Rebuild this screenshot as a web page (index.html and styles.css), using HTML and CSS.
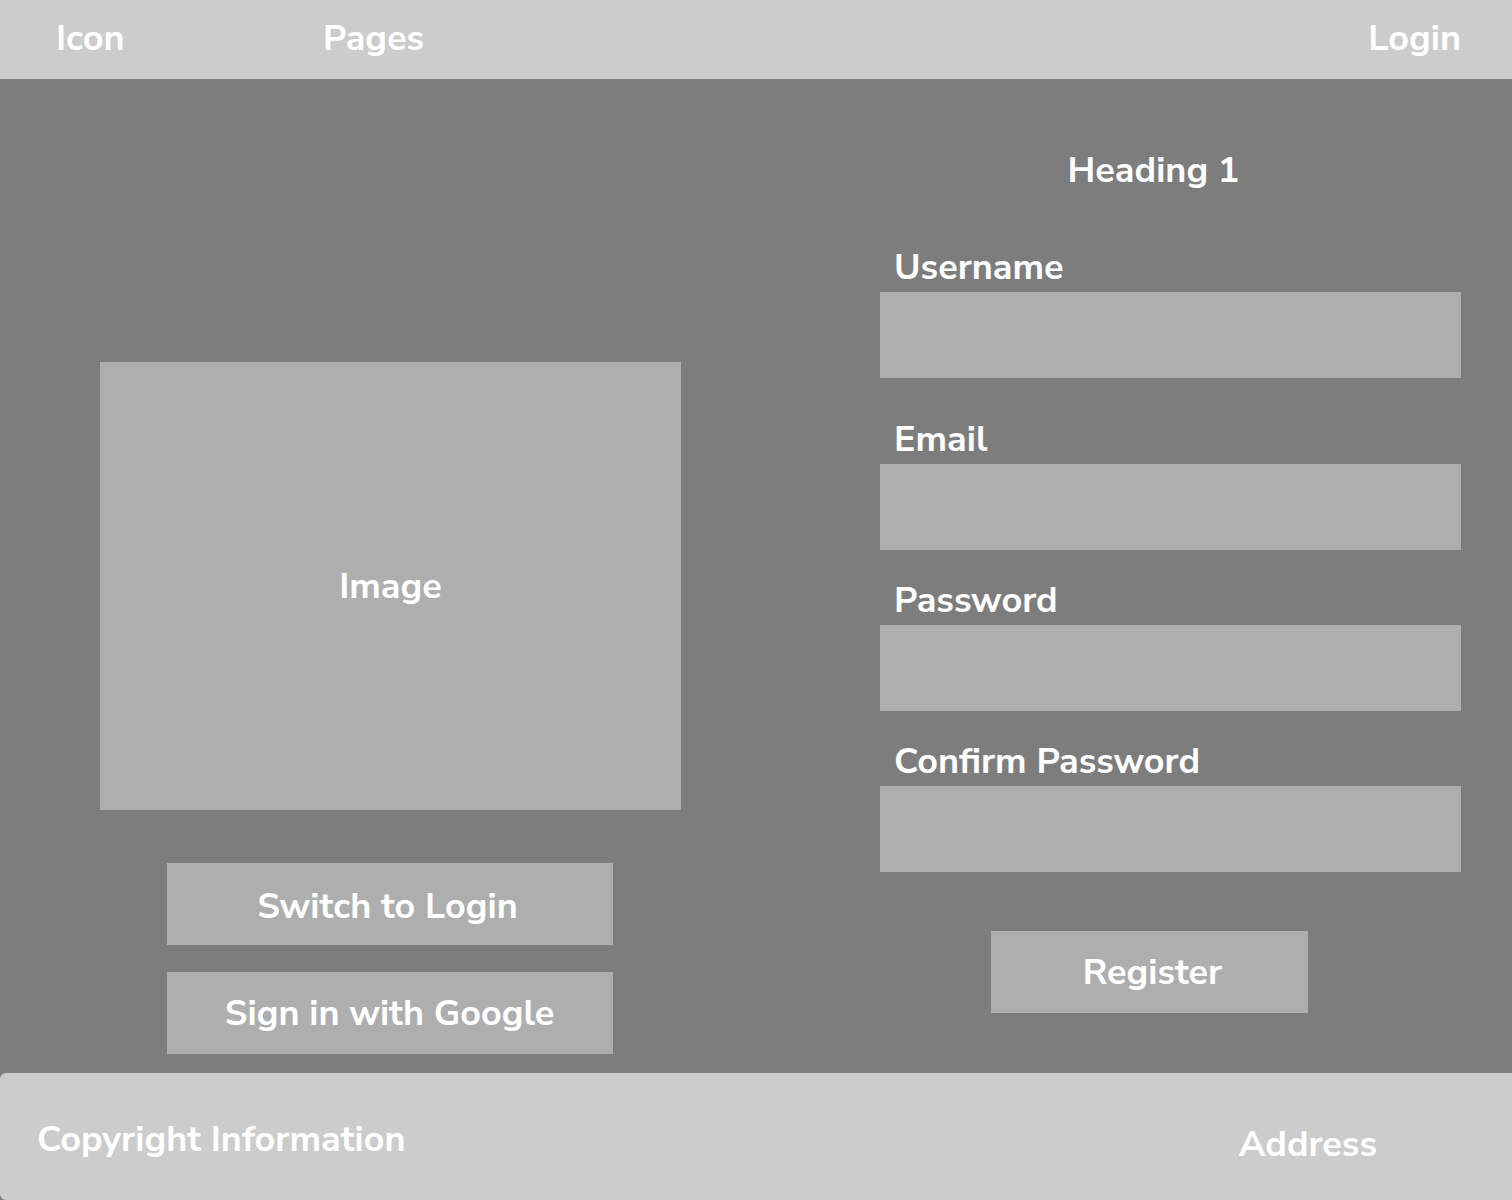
FILE: index.html
```html
<!DOCTYPE html>
<html lang="en">
<head>
  <meta charset="utf-8">
  <meta name="viewport" content="width=device-width, initial-scale=1">
  <title>Register</title>
  <link rel="stylesheet" href="styles.css">
</head>
<body>
  <header class="site-header">
    <a class="brand" href="#">Icon</a>
    <nav class="site-nav"><a href="#">Pages</a></nav>
    <a href="#">Login</a>
  </header>

  <main class="content">
    <section class="aside">
      <div class="image">Image</div>
      <div class="alternatives">
        <button class="button button-switch" type="button">Switch to Login</button>
        <button class="button" type="button">Sign in with Google</button>
      </div>
    </section>

    <form class="register">
      <h1 class="title">Heading 1</h1>
      <div class="fields">
        <div class="field field-first">
          <label for="username">Username</label>
          <input id="username" type="text" autocomplete="username">
        </div>
        <div class="field">
          <label for="email">Email</label>
          <input id="email" type="email" autocomplete="email">
        </div>
        <div class="field">
          <label for="password">Password</label>
          <input id="password" type="password" autocomplete="new-password">
        </div>
        <div class="field">
          <label for="confirm">Confirm Password</label>
          <input id="confirm" type="password" autocomplete="new-password">
        </div>
      </div>
      <div class="actions">
        <button class="button button-submit" type="submit">Register</button>
      </div>
    </form>
  </main>

  <footer class="site-footer">
    <span>Copyright Information</span>
    <address class="address">Address</address>
  </footer>
</body>
</html>
```

FILE: styles.css
```css
*,
*::before,
*::after {
  box-sizing: border-box;
}

body {
  display: flex;
  flex-direction: column;
  min-height: 100vh;
  margin: 0;
  background: #7d7d7d;
  color: #fff;
  font: 700 36px/48px "Nunito Sans", Nunito, Lato, sans-serif;
}

a {
  color: inherit;
  text-decoration: none;
}

.site-header {
  display: flex;
  padding: 15px 51px 16px 56px;
  background: #ccc;
}

.brand {
  flex: 0 0 267px;
}

.site-nav {
  flex: 1;
}

.content {
  flex: 1;
  display: grid;
  grid-template-columns: 1fr 1fr;
  gap: 199px;
  padding: 68px 51px 19px 100px;
}

.aside {
  display: flex;
  flex-direction: column;
  justify-content: flex-end;
  gap: 53px;
}

.image {
  display: grid;
  place-items: center;
  min-height: 448px;
  padding-top: 2px;
  background: #aeaeae;
}

.alternatives {
  display: flex;
  flex-direction: column;
  align-items: center;
  gap: 27px;
  padding-right: 2px;
}

.button {
  width: 446px;
  max-width: 100%;
  padding: 18px 0 16px;
  border: 0;
  background: #aeaeae;
  color: inherit;
  font: inherit;
  cursor: pointer;
}

.button-switch {
  padding: 20px 4px 14px 0;
}

.title {
  margin: 0 0 49px;
  padding-right: 34px;
  font: inherit;
  text-align: center;
}

.fields {
  display: flex;
  flex-direction: column;
  gap: 27px;
}

.field-first {
  margin-bottom: 11px;
}

.field label {
  display: block;
  padding-left: 14px;
}

.field input {
  display: block;
  width: 100%;
  height: 86px;
  padding: 0 14px;
  border: 0;
  border-radius: 0;
  background: #aeaeae;
  color: inherit;
  font: inherit;
}

.actions {
  display: flex;
  justify-content: center;
  margin-top: 59px;
  padding-right: 42px;
}

.button-submit {
  width: 317px;
  padding-left: 6px;
}

.site-footer {
  display: flex;
  justify-content: space-between;
  padding: 43px 135px 31px 37px;
  border-radius: 6px 0 0 6px;
  background: #ccc;
}

.address {
  padding-top: 5px;
  font-style: normal;
}
```
